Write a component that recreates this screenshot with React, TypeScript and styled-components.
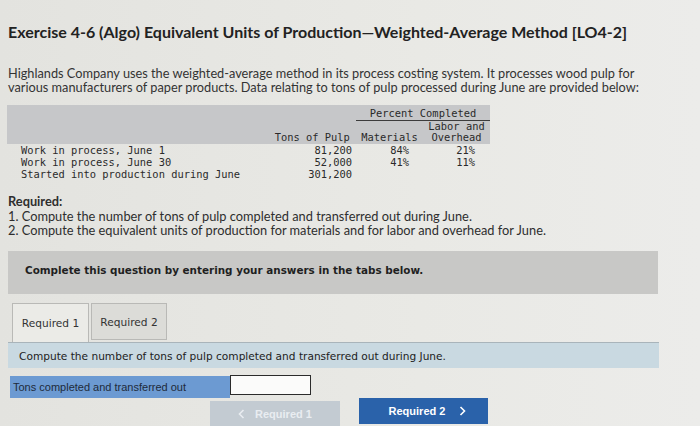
import styled, { createGlobalStyle } from "styled-components";

const GlobalStyles = createGlobalStyle`
  *, *::before, *::after {
    box-sizing: border-box;
    margin: 0;
    padding: 0;
  }
  html, body {
    width: 700px;
    height: 426px;
    overflow: hidden;
    background: #e7e7e3;
  }
  body {
    font-family: "Lato", "Liberation Sans", sans-serif;
    color: #2b2b2b;
  }
`;

const Page = styled.div`
  width: 700px;
  height: 426px;
  padding: 22px 0 0 8px;
  background: linear-gradient(90deg, #e3e3df 0%, #e9e9e5 60%, #ececea 100%);
`;

const Title = styled.h1`
  font-family: "Lato", sans-serif;
  font-weight: 700;
  font-size: 16px;
  line-height: 20px;
  color: #222;
  margin-bottom: 24px;
`;

const Intro = styled.p`
  font-size: 12.75px;
  line-height: 14px;
  color: #333;
  margin-bottom: 11px;
`;

const DataTable = styled.table`
  border-collapse: collapse;
  margin-left: -1px;
  font-family: "DejaVu Sans Mono", "Liberation Mono", monospace;
  font-size: 10.4px;
  color: #2a2a2a;
  margin-bottom: 14px;

  thead {
    background: #c6c7c9;
    line-height: 11.5px;
  }
  tbody {
    line-height: 12.3px;
  }
  thead tr:first-child th {
    padding-top: 3px;
  }
  th {
    font-weight: 400;
    white-space: pre;
  }
  td {
    white-space: pre;
  }
`;

const LabelCell = styled.td`
  width: 265px;
  padding-left: 14px;
  text-align: left;
`;

const TonsCell = styled.td`
  width: 84px;
  padding-right: 4px;
  text-align: right;
`;

const PctCell = styled.td<{ $pad: number }>`
  width: 67px;
  padding-right: ${(p) => p.$pad}px;
  text-align: right;
`;

const HeadCell = styled.th<{ $align?: string }>`
  text-align: ${(p) => p.$align || "center"};
`;

const SpanHead = styled.th`
  text-align: center;
  border-bottom: 1px solid #3c3c3c;
`;

const Required = styled.div`
  font-size: 12.8px;
  line-height: 14px;
  color: #2e2e2e;
  margin-bottom: 14px;

  strong {
    display: block;
    font-weight: 700;
    margin-bottom: 1px;
  }
`;

const Notice = styled.div`
  width: 650px;
  height: 43px;
  background: #c8c8c6;
  padding: 13px 0 0 17px;
  font-family: "DejaVu Sans", Verdana, sans-serif;
  font-weight: 700;
  font-size: 10.4px;
  color: #1f1f1f;
  margin-bottom: 9px;
`;

const Tabs = styled.div`
  display: flex;
  gap: 2px;
  padding-left: 4px;
`;

const Tab = styled.div<{ $active?: boolean }>`
  width: ${(p) => (p.$active ? 77 : 76)}px;
  height: ${(p) => (p.$active ? 39 : 37)}px;
  align-self: flex-start;
  display: flex;
  align-items: center;
  justify-content: center;
  font-family: "DejaVu Sans", Verdana, sans-serif;
  font-size: 10.6px;
  color: #333;
  background: ${(p) => (p.$active ? "#ebebe7" : "#dcdcd8")};
  border: 1px solid #b9b9b6;
  border-bottom: ${(p) => (p.$active ? "none" : "1px solid #b9b9b6")};
`;

const Instruction = styled.div`
  width: 651px;
  height: 26px;
  background: #c9d9e1;
  border-top: 1px solid #a9b4ba;
  display: flex;
  align-items: center;
  padding-left: 11px;
  font-family: "DejaVu Sans", Verdana, sans-serif;
  font-size: 10.6px;
  color: #222;
  margin-bottom: 7px;
`;

const AnswerRow = styled.div`
  display: flex;
  align-items: flex-start;
  padding-left: 2px;
`;

const AnswerLabel = styled.div`
  width: 220px;
  height: 22px;
  margin-top: 1px;
  background: #6c9ad2;
  display: flex;
  align-items: center;
  padding-left: 3px;
  font-family: "Liberation Sans", Arial, sans-serif;
  font-size: 11px;
  color: #1e2a3a;
`;

const AnswerInput = styled.input`
  width: 81px;
  height: 20px;
  background: #fbfbfa;
  border: 1px solid #2b2b2b;
  outline: none;
`;

const NavRow = styled.div`
  display: flex;
  align-items: flex-start;
  gap: 19px;
  padding-left: 202px;
`;

const NavButton = styled.div<{ $primary?: boolean }>`
  width: ${(p) => (p.$primary ? 129 : 130)}px;
  height: 26px;
  margin-top: ${(p) => (p.$primary ? 0 : 3)}px;
  display: flex;
  align-items: center;
  justify-content: center;
  gap: ${(p) => (p.$primary ? 14 : 10)}px;
  background: ${(p) => (p.$primary ? "#2a62aa" : "#c3cbd2")};
  color: ${(p) => (p.$primary ? "#ffffff" : "#e9edf1")};
  font-family: "Liberation Sans", Arial, sans-serif;
  font-weight: 700;
  font-size: 11px;
  padding-left: ${(p) => (p.$primary ? 8 : 0)}px;
`;

const Chevron = ({ dir }: { dir: "left" | "right" }) => (
  <svg width="7" height="10" viewBox="0 0 7 10">
    <path
      d={dir === "left" ? "M5.5 1 L1.5 5 L5.5 9" : "M1.5 1 L5.5 5 L1.5 9"}
      fill="none"
      stroke="currentColor"
      strokeWidth="1.6"
    />
  </svg>
);

const rows = [
  { label: "Work in process, June 1", tons: "81,200", mat: "84%", lab: "21%" },
  { label: "Work in process, June 30", tons: "52,000", mat: "41%", lab: "11%" },
  { label: "Started into production during June", tons: "301,200", mat: "", lab: "" },
];

function App() {
  return (
    <>
      <GlobalStyles />
      <Page>
        <Title>
          Exercise 4-6 (Algo) Equivalent Units of Production—Weighted-Average
          Method [LO4-2]
        </Title>
        <Intro>
          Highlands Company uses the weighted-average method in its process
          costing system. It processes wood pulp for
          <br />
          various manufacturers of paper products. Data relating to tons of
          pulp processed during June are provided below:
        </Intro>
        <DataTable>
          <thead>
            <tr>
              <HeadCell />
              <HeadCell />
              <SpanHead colSpan={2}>Percent Completed</SpanHead>
            </tr>
            <tr>
              <HeadCell />
              <HeadCell />
              <HeadCell />
              <HeadCell>Labor and</HeadCell>
            </tr>
            <tr>
              <HeadCell />
              <HeadCell $align="right">Tons of Pulp </HeadCell>
              <HeadCell>Materials</HeadCell>
              <HeadCell>Overhead</HeadCell>
            </tr>
          </thead>
          <tbody>
            {rows.map((r) => (
              <tr key={r.label}>
                <LabelCell>{r.label}</LabelCell>
                <TonsCell>{r.tons}</TonsCell>
                <PctCell $pad={14}>{r.mat}</PctCell>
                <PctCell $pad={15}>{r.lab}</PctCell>
              </tr>
            ))}
          </tbody>
        </DataTable>
        <Required>
          <strong>Required:</strong>
          1. Compute the number of tons of pulp completed and transferred out
          during June.
          <br />
          2. Compute the equivalent units of production for materials and for
          labor and overhead for June.
        </Required>
        <Notice>Complete this question by entering your answers in the tabs below.</Notice>
        <Tabs>
          <Tab $active>Required 1</Tab>
          <Tab>Required 2</Tab>
        </Tabs>
        <Instruction>
          Compute the number of tons of pulp completed and transferred out
          during June.
        </Instruction>
        <AnswerRow>
          <AnswerLabel>Tons completed and transferred out</AnswerLabel>
          <AnswerInput />
        </AnswerRow>
        <NavRow>
          <NavButton>
            <Chevron dir="left" />
            Required 1
          </NavButton>
          <NavButton $primary>
            Required 2
            <Chevron dir="right" />
          </NavButton>
        </NavRow>
      </Page>
    </>
  );
}

export default App;
